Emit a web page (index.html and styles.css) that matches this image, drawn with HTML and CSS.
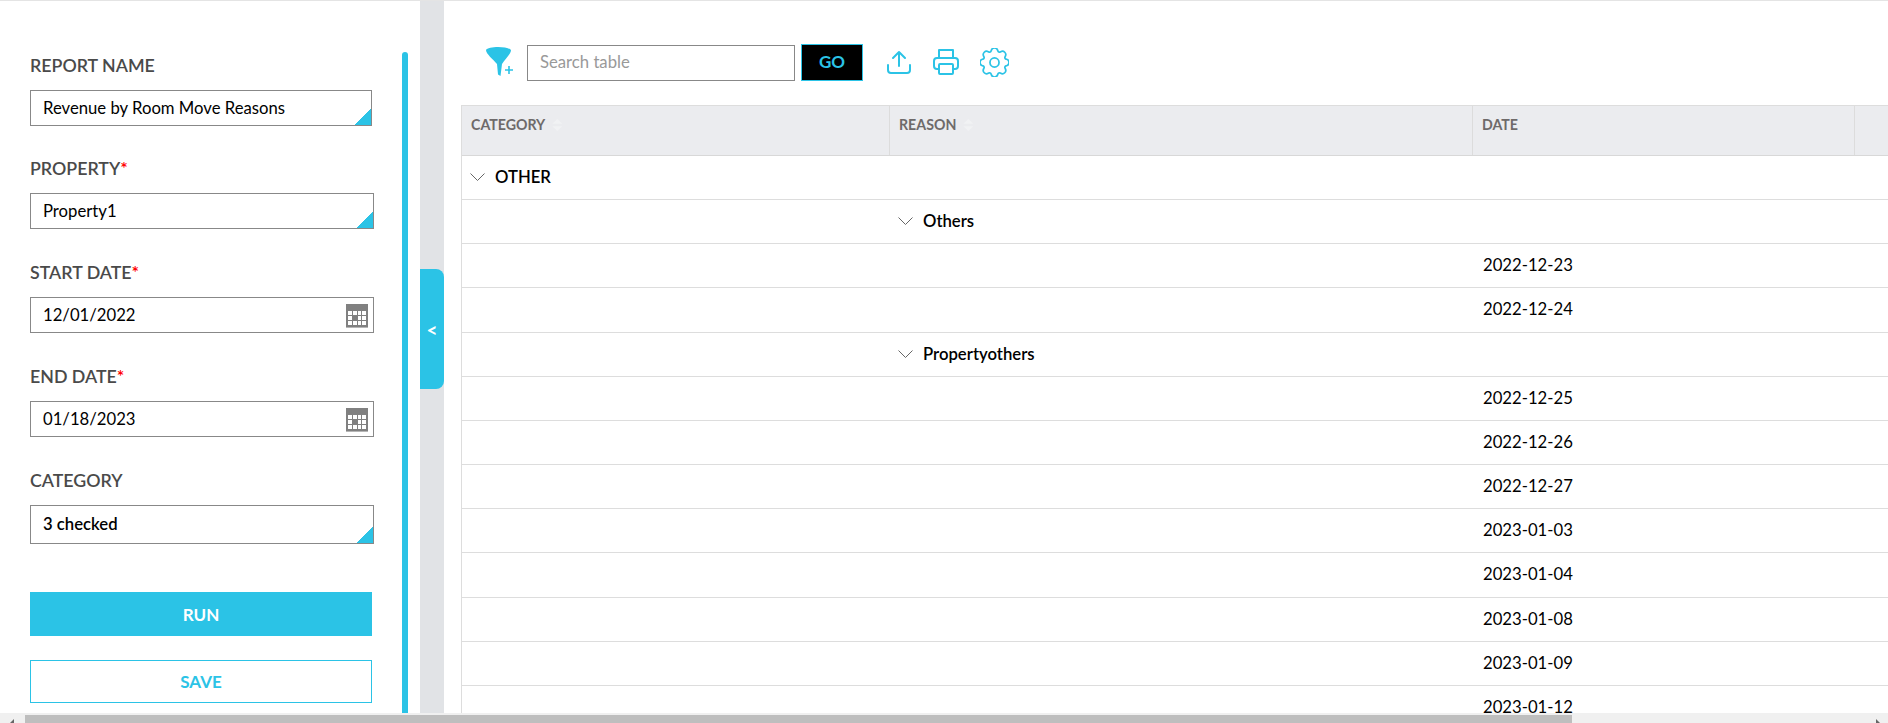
FILE: index.html
```html
<!DOCTYPE html>
<html lang="en">
<head>
    <meta charset="UTF-8">
    <title>Revenue by Room Move Reasons</title>
    <link rel="stylesheet" href="styles.css">
</head>
<body>
    <div class="page">
        <!-- REPORT FILTERS -->
        <aside class="sidebar">
            <form class="report_form">
                <label class="form_label">REPORT NAME</label>
                <div class="field field_corner field_name">Revenue by Room Move Reasons</div>

                <label class="form_label">PROPERTY<span class="req">*</span></label>
                <div class="field field_corner">Property1</div>

                <label class="form_label">START DATE<span class="req">*</span></label>
                <div class="field">
                    12/01/2022
                    <svg class="cal_icon" viewBox="0 0 22 24"><use href="#cal"></use></svg>
                </div>

                <label class="form_label">END DATE<span class="req">*</span></label>
                <div class="field">
                    01/18/2023
                    <svg class="cal_icon" viewBox="0 0 22 24"><use href="#cal"></use></svg>
                </div>

                <label class="form_label">CATEGORY</label>
                <div class="field field_corner field_category">3 checked</div>

                <button type="button" class="btn_run">RUN</button>
                <button type="button" class="btn_save">SAVE</button>
            </form>
            <div class="side_scroll"></div>
        </aside>

        <div class="collapse_bar">
            <div class="collapse_handle">&lt;</div>
        </div>

        <!-- REPORT TABLE -->
        <main class="report">
            <div class="toolbar">
                <svg class="filter_icon" viewBox="0 0 30 32">
                    <path d="M1 5C3 1 23 1 26 5C26 9 20 14 17 19L15.500 31L13 29.500L12 19C8 14 1 9 1 5Z" fill="#2bc3e6"/>
                    <path d="M20 25H28M24 21V29" stroke="#2bc3e6" stroke-width="1.600" fill="none"/>
                </svg>
                <input class="search_input" type="text" placeholder="Search table">
                <button type="button" class="btn_go">GO</button>
                <div class="tool_icons">
                    <svg class="upload_icon" viewBox="0 0 24 24" fill="none" stroke="#2bc3e6" stroke-width="2" stroke-linecap="round" stroke-linejoin="round">
                        <path d="M1 15V20C1 21.700 2.300 23 4 23H20C21.700 23 23 21.700 23 20V15"/>
                        <path d="M12 16V2M6 8L12 2L18 8"/>
                    </svg>
                    <svg class="print_icon" viewBox="0 0 26 26" fill="none" stroke="#2bc3e6" stroke-width="2" stroke-linejoin="round">
                        <path d="M6 9V1H20V9"/>
                        <path d="M6 20H4C2.300 20 1 18.700 1 17V12C1 10.300 2.300 9 4 9H22C23.700 9 25 10.300 25 12V17C25 18.700 23.700 20 22 20H20"/>
                        <rect x="6" y="15" width="14" height="10" rx="1"/>
                    </svg>
                    <svg class="gear_icon" viewBox="0 0 16 16" fill="none" stroke="#2bc3e6" stroke-width="0.950">
                        <circle cx="8" cy="8" r="2.500"/>
                        <path d="M9.796 1.343c-.527-1.79-3.065-1.79-3.592 0l-.094.319a.873.873 0 0 1-1.255.52l-.292-.16c-1.64-.892-3.433.902-2.54 2.541l.159.292a.873.873 0 0 1-.52 1.255l-.319.094c-1.79.527-1.79 3.065 0 3.592l.319.094a.873.873 0 0 1 .52 1.255l-.16.292c-.892 1.64.901 3.434 2.541 2.54l.292-.159a.873.873 0 0 1 1.255.52l.094.319c.527 1.79 3.065 1.79 3.592 0l.094-.319a.873.873 0 0 1 1.255-.52l.292.16c1.64.893 3.434-.902 2.54-2.541l-.159-.292a.873.873 0 0 1 .52-1.255l.319-.094c1.79-.527 1.79-3.065 0-3.592l-.319-.094a.873.873 0 0 1-.52-1.255l.16-.292c.893-1.64-.902-3.433-2.541-2.54l-.292.159a.873.873 0 0 1-1.255-.52l-.094-.319z"/>
                    </svg>
                </div>
            </div>

            <div class="table">
                <div class="table_row table_head">
                    <div class="head_cell">CATEGORY<span class="sort"></span></div>
                    <div class="head_cell">REASON<span class="sort"></span></div>
                    <div class="head_cell">DATE</div>
                    <div class="head_cell"></div>
                </div>

                <div class="table_row">
                    <div class="group_cell group_top"><svg class="chevron" viewBox="0 0 15 8"><path d="M.5 .5L7.500 7.500L14.500 .5"/></svg>OTHER</div>
                </div>
                <div class="table_row">
                    <div></div>
                    <div class="group_cell"><svg class="chevron" viewBox="0 0 15 8"><path d="M.5 .5L7.500 7.500L14.500 .5"/></svg>Others</div>
                </div>
                <div class="table_row"><div></div><div></div><div class="date_cell">2022-12-23</div></div>
                <div class="table_row"><div></div><div></div><div class="date_cell">2022-12-24</div></div>
                <div class="table_row">
                    <div></div>
                    <div class="group_cell"><svg class="chevron" viewBox="0 0 15 8"><path d="M.5 .5L7.500 7.500L14.500 .5"/></svg>Propertyothers</div>
                </div>
                <div class="table_row"><div></div><div></div><div class="date_cell">2022-12-25</div></div>
                <div class="table_row"><div></div><div></div><div class="date_cell">2022-12-26</div></div>
                <div class="table_row"><div></div><div></div><div class="date_cell">2022-12-27</div></div>
                <div class="table_row"><div></div><div></div><div class="date_cell">2023-01-03</div></div>
                <div class="table_row"><div></div><div></div><div class="date_cell">2023-01-04</div></div>
                <div class="table_row"><div></div><div></div><div class="date_cell">2023-01-08</div></div>
                <div class="table_row"><div></div><div></div><div class="date_cell">2023-01-09</div></div>
                <div class="table_row"><div></div><div></div><div class="date_cell">2023-01-12</div></div>
            </div>
        </main>
    </div>

    <div class="page_scroll">
        <span class="arrow_left"></span>
        <div class="page_scroll_thumb"></div>
        <span class="arrow_right"></span>
    </div>

    <svg class="svg_defs">
        <symbol id="cal" viewBox="0 0 22 24">
            <rect width="22" height="24" fill="#808080"/>
            <path fill="#fff" d="M2 7h4v4H2zM7 7h4v4H7zM12 7h3v4h-3zM16 7h4v4h-4zM2 12h4v4H2zM12 12h3v4h-3zM16 12h4v4h-4zM2 17h4v4H2zM7 17h4v4H7zM12 17h3v4h-3zM16 17h4v4h-4z"/>
            <rect y="23" width="22" height="1" fill="#b5b5b5"/>
        </symbol>
    </svg>
</body>
</html>
```

FILE: styles.css
```css
* {
    box-sizing: border-box;
}

html, body {
    height: 100%;
}

body {
    margin: 0;
    display: flex;
    flex-direction: column;
    overflow: hidden;
    border-top: 1px solid #e4e4e4;
    font-family: 'Lato', sans-serif;
    color: #000;
    background-color: #fff;
}

.page {
    flex: 1;
    min-height: 0;
    display: flex;
    overflow: hidden;
}

/* sidebar */
.sidebar {
    width: 420px;
    flex: none;
    display: flex;
}

.report_form {
    width: 402px;
    padding: 53px 0 0 30px;
}

.form_label {
    display: block;
    height: 20px;
    margin-bottom: 16px;
    line-height: 22px;
    font-size: 17.8px;
    font-weight: 600;
    color: #4a4a4a;
}

.req {
    color: #f00;
}

.field {
    position: relative;
    width: 344px;
    height: 36px;
    margin-bottom: 32px;
    padding-left: 12px;
    border: 1px solid #888;
    line-height: 34px;
    font-size: 16.7px;
}

.field_name {
    width: 342px;
    margin-bottom: 31px;
}

.field_corner {
    background: linear-gradient(135deg, transparent 50%, #2bc3e6 50%) no-repeat right bottom / 16px 16px;
}

.field_category {
    height: 39px;
    margin-bottom: 48px;
    line-height: 37px;
    font-weight: 600;
}

.cal_icon {
    position: absolute;
    right: 5px;
    top: 6px;
    width: 22px;
    height: 24px;
}

.btn_run, .btn_save {
    display: block;
    width: 342px;
    font-family: inherit;
    font-size: 17px;
    font-weight: 700;
    cursor: pointer;
}

.btn_run {
    height: 44px;
    margin-bottom: 24px;
    border: none;
    color: #fff;
    background-color: #2bc3e6;
}

.btn_save {
    height: 43px;
    border: 1px solid #2bc3e6;
    color: #2bc3e6;
    background-color: #fff;
}

.side_scroll {
    width: 6px;
    margin-top: 51px;
    border-radius: 3px 3px 0 0;
    background-color: #2bc3e6;
}

.collapse_bar {
    width: 24px;
    flex: none;
    padding-top: 268px;
    background-color: #e1e3e6;
}

.collapse_handle {
    height: 120px;
    border-radius: 0 8px 8px 0;
    line-height: 122px;
    text-align: center;
    font-size: 19px;
    font-weight: 700;
    color: #fff;
    background-color: #2bc3e6;
}

/* table area */
.report {
    flex: 1;
    min-width: 0;
    padding-left: 17px;
    overflow: hidden;
}

.toolbar {
    height: 104px;
    display: flex;
    align-items: flex-start;
    padding-top: 44px;
}

.filter_icon {
    width: 30px;
    height: 32px;
    margin: 0 0 0 24px;
}

.search_input {
    width: 268px;
    height: 36px;
    margin-left: 12px;
    padding: 0 12px 2px;
    border: 1px solid #888;
    border-radius: 0;
    font-family: inherit;
    font-size: 16.7px;
    outline: none;
}

.search_input::placeholder {
    color: #999;
}

.btn_go {
    width: 62px;
    height: 37px;
    margin: -1px 0 0 6px;
    padding: 0 0 2px;
    border: 1px solid #2bc3e6;
    font-family: inherit;
    font-size: 17px;
    font-weight: 700;
    color: #2bc3e6;
    background-color: #000;
}

.tool_icons {
    display: flex;
    align-items: flex-start;
    margin-left: 24px;
}

.upload_icon {
    width: 24px;
    height: 24px;
    margin-top: 5px;
}

.print_icon {
    width: 26px;
    height: 26px;
    margin: 4px 0 0 22px;
}

.gear_icon {
    width: 29px;
    height: 29px;
    margin: 3px 0 0 21px;
}

.table {
    width: 1427px;
    border-left: 1px solid #ddd;
}

.table_row {
    display: grid;
    grid-template-columns: 428px 583px 382px 1fr;
    height: 44.17px;
    border-bottom: 1px solid #ddd;
}

.table_head {
    height: 51px;
    border-top: 1px solid #ddd;
    border-bottom: 1px solid #d8d8d8;
    background-color: #ebecef;
}

.head_cell {
    padding: 10px 0 0 9px;
    border-right: 1px solid #dcdcdc;
    font-size: 14.2px;
    font-weight: 700;
    color: #6e6a6a;
}

.head_cell:last-child {
    border-right: none;
}

.sort {
    display: inline-block;
    width: 10px;
    height: 12px;
    margin-left: 7px;
    vertical-align: -1px;
    background-color: #f1f2f4;
    clip-path: polygon(50% 0, 100% 40%, 0 40%, 0 60%, 100% 60%, 50% 100%, 0 60%, 0 40%);
}

.group_cell {
    display: flex;
    align-items: center;
    padding: 0 0 1px 8px;
    font-size: 16.7px;
    font-weight: 600;
    white-space: nowrap;
}

.group_top {
    grid-column: 1 / 3;
}

.chevron {
    width: 15px;
    height: 8px;
    margin-right: 10px;
    fill: none;
    stroke: #666;
    stroke-width: 1;
}

.date_cell {
    padding-left: 10px;
    line-height: 42px;
    font-size: 16.7px;
}

/* page scrollbar */
.page_scroll {
    height: 10px;
    flex: none;
    position: relative;
    padding: 2px 0 0 25px;
    background-color: #f0f0f0;
}

.page_scroll_thumb {
    width: 1547px;
    height: 100%;
    background-color: #bebebe;
}

.arrow_left, .arrow_right {
    position: absolute;
    bottom: 0;
    width: 0;
    height: 0;
    border-top: 4px solid transparent;
}

.arrow_left {
    left: 10px;
    border-right: 4px solid #666;
}

.arrow_right {
    right: 8px;
    border-left: 4px solid #666;
}

.svg_defs {
    display: none;
}
```
